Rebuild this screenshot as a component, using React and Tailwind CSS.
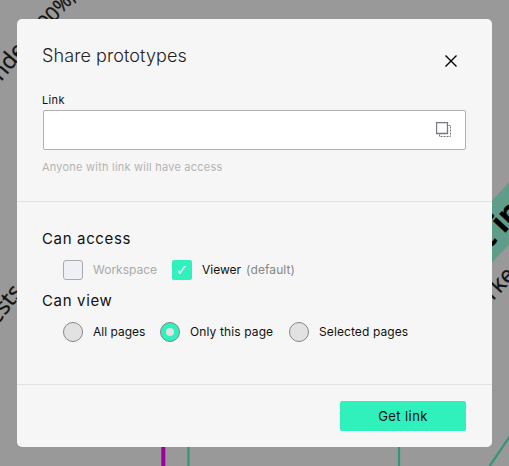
const sans = "font-['Inter','Liberation_Sans',sans-serif]";

function Canvas() {
  return (
    <svg className="absolute inset-0" width="509" height="466" viewBox="0 0 509 466" aria-hidden="true">
      <path d="M470 286L530 222V160L470 224Z" fill="#5f9c89" />
      <path d="M163.3 440V466" stroke="#9b009f" strokeWidth="4" />
      <path d="M188.5 440V466M399 440V466M489 467L512 433" stroke="#34957a" strokeWidth="2.2" fill="none" />
      <g fontFamily="Open Sans, Noto Sans, sans-serif" fill="#111" stroke="#111" strokeWidth=".3">
        <text transform="translate(1 82) rotate(-50)" fontSize="23">nde</text>
        <text transform="translate(46 31) rotate(-47)" fontSize="20">00%,</text>
        <text transform="translate(-3 326) rotate(-52)" fontSize="23">ests</text>
        <text transform="translate(493 301) rotate(-47)" fontSize="23">rke</text>
        <text transform="translate(489 250) rotate(-47)" fontSize="31" fontWeight="700" fill="#000">t in</text>
      </g>
    </svg>
  );
}

function Radio({ label, checked, className }) {
  return (
    <div className={`flex items-center ${className}`}>
      <span className={`flex size-5 shrink-0 items-center justify-center rounded-full border border-[#86868c] ${checked ? "bg-[#30f0bb]" : "bg-[#e2e2e2]"}`}>
        {checked && <span className="size-2 rounded-full bg-[#e2e2e2]" />}
      </span>
      <span className="ml-[10px] whitespace-nowrap">{label}</span>
    </div>
  );
}

export default function App() {
  return (
    <div className={`relative h-[466px] w-[509px] overflow-hidden bg-[#999] pt-[19px] pl-[17px] text-[#111] ${sans}`}>
      <Canvas />
      <section className="relative flex h-[428px] w-[475px] flex-col rounded-[5px] bg-[#f6f6f6]">
        <header className="h-[183px] border-b border-[#e2e2e2] px-[26px] pt-[22px]">
          <div className="flex h-10 items-start justify-between">
            <h1 className="-ml-px text-[18px] leading-[30px] font-light tracking-[0.09px] text-[#222]">Share prototypes</h1>
            <svg className="mt-[14px] mr-[9px]" width="12" height="12" viewBox="0 0 12 12" stroke="#000" strokeWidth="1.4">
              <path d="M.5.5L11.5 11.5M11.5.5L.5 11.5" />
            </svg>
          </div>
          <label className="-mt-px -ml-px block pt-[11px] text-[11px] leading-[18px] tracking-[0.35px]">Link</label>
          <div className="mt-px flex h-10 items-center justify-end rounded-[2px] border border-[#b1b1b5] bg-white pr-[14px]">
            <svg className="-mt-px" width="15" height="15" viewBox="0 0 15 15" fill="none" stroke="#777783">
              <path d="M.5.5H11.5V11.5H.5Z" strokeWidth="1.3" />
              <path d="M12.5 3.5H14.5V14.5H3.5V12.5" strokeDasharray="2 1" />
            </svg>
          </div>
          <p className="mt-2 -ml-px text-[11px] leading-[18px] tracking-[0.22px] text-[#b4b4b4]">Anyone with link will have access</p>
        </header>
        <main className="h-[183px] border-b border-[#e2e2e2] px-[26px] pt-[25px] text-[12px]">
          <h2 className="-ml-px text-[15px] leading-6 tracking-[0.65px]">Can access</h2>
          <div className="mt-[9px] flex h-5 items-center pl-5">
            <span className="size-5 rounded-[3px] border border-[#aaaab0] bg-[#eff0f6]" />
            <span className="ml-[10px] w-[79px] whitespace-nowrap text-[#aaa]">Workspace</span>
            <span className="flex size-5 items-center justify-center rounded-[2px] bg-[#30f0bb] font-['DejaVu_Sans',sans-serif] text-[15px] leading-5 text-white">✓</span>
            <span className="ml-[10px]">Viewer</span>
            <span className="ml-[5px] tracking-[0.1px] text-[#858589]">(default)</span>
          </div>
          <h2 className="mt-[9px] -ml-px text-[15px] leading-6 tracking-[0.65px]">Can view</h2>
          <div className="mt-[9px] flex h-5 items-center pl-5">
            <Radio label="All pages" className="w-[97px]" />
            <Radio label="Only this page" checked className="w-[129px] tracking-[0.12px]" />
            <Radio label="Selected pages" className="tracking-[0.1px]" />
          </div>
        </main>
        <footer className="flex justify-end px-[26px] pt-4">
          <button className="h-[30px] w-[126px] rounded-[2px] bg-[#30f0bb] pt-px text-[13px] tracking-[0.4px]">Get link</button>
        </footer>
      </section>
    </div>
  );
}
